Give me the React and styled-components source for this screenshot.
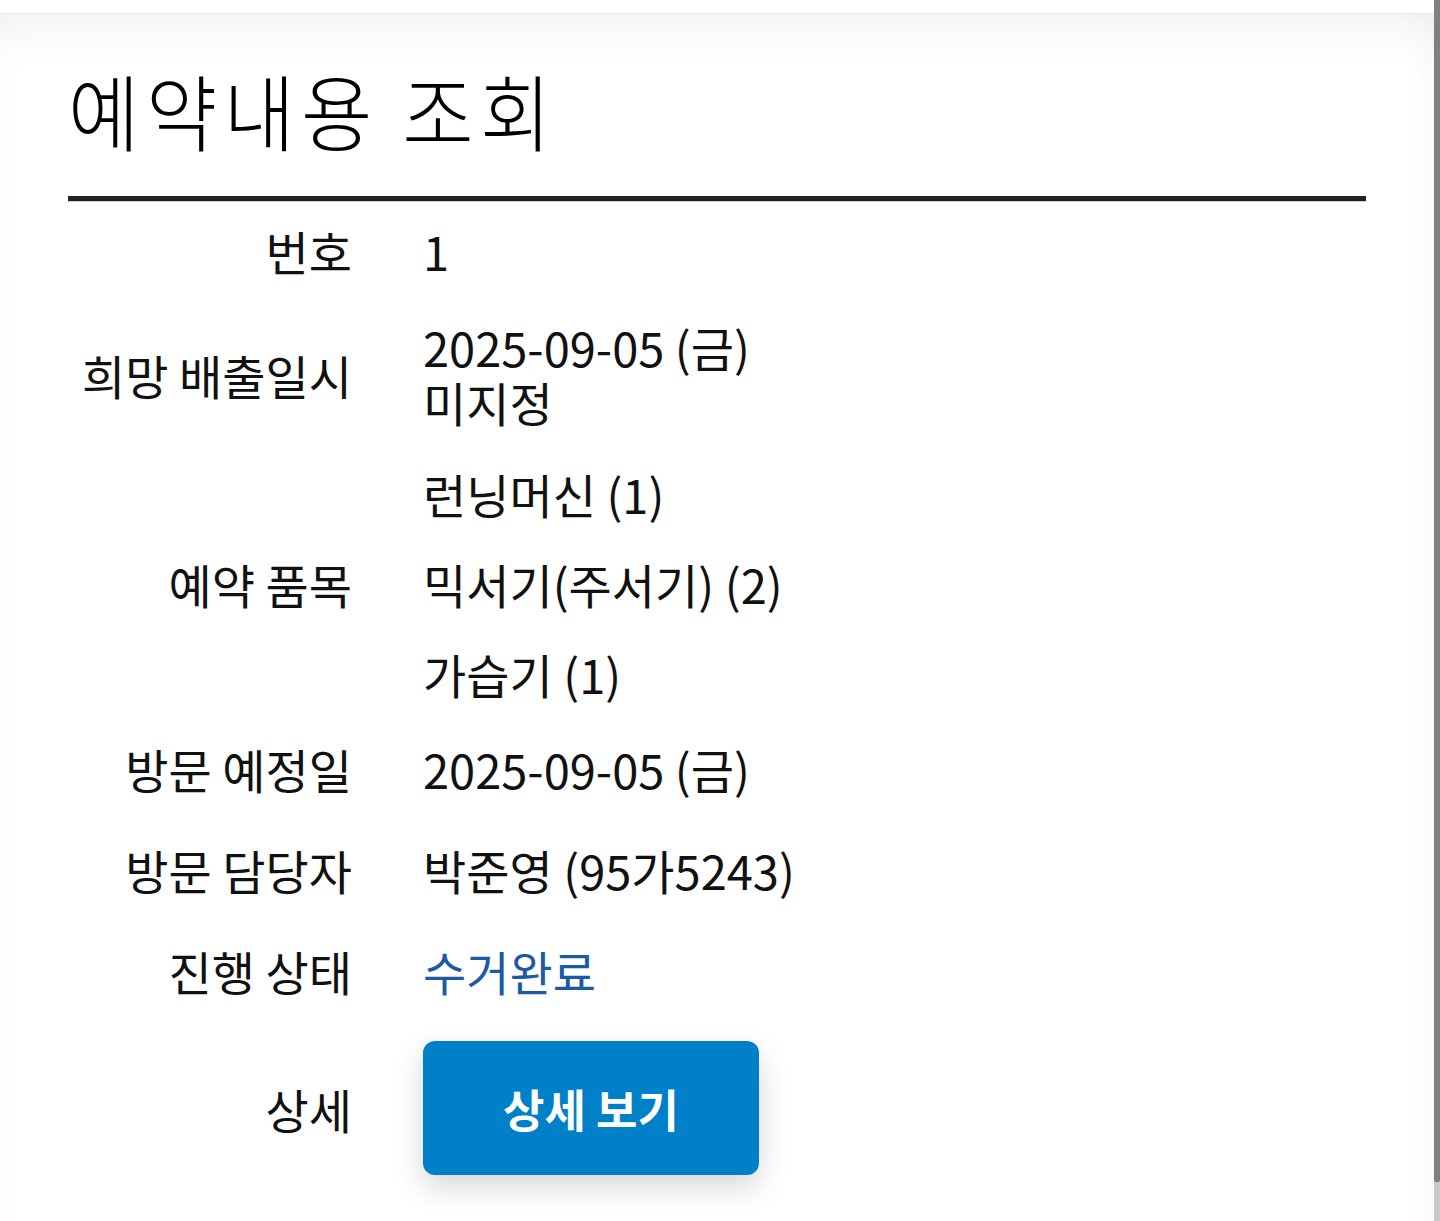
import React from "react";
import styled, { createGlobalStyle } from "styled-components";

const GlobalStyle = createGlobalStyle`
  html, body { margin: 0; padding: 0; background: #ffffff; }
  body {
    font-family: "Noto Sans CJK KR", "Noto Sans", sans-serif;
    color: #111111;
    overflow: hidden;
  }
  * { box-sizing: border-box; }
`;

const Page = styled.div`
  min-height: 100vh;
  padding-right: 6px;
  background: #ffffff;
`;

const TopStrip = styled.div`
  height: 13px;
  background: #ffffff;
`;

const Sheet = styled.main`
  min-height: calc(100vh - 13px);
  border-top: 1px solid #e6e6e6;
  background: #ffffff;
  box-shadow: inset 0 40px 60px -40px rgba(0, 0, 0, 0.09),
    inset -30px 0 40px -30px rgba(0, 0, 0, 0.035);
  padding: 55px 68px 40px 68px;
`;

const Title = styled.h1`
  margin: 0;
  font-family: "Noto Sans CJK KR", sans-serif;
  font-weight: 300;
  font-size: 80px;
  line-height: 80px;
  letter-spacing: 6.5px;
  color: #000;
  transform: scale(0.97, 1.03);
  transform-origin: left center;
`;

const Rule = styled.div`
  margin-top: 47px;
  height: 5px;
  background: #222222;
  box-shadow: 0 1px 0 #cfcfcf;
  margin-bottom: 1px;
`;

const InfoTable = styled.div`
  display: grid;
  grid-template-columns: 284px 1fr;
  column-gap: 71px;
`;

const Label = styled.div`
  display: flex;
  align-items: center;
  justify-content: flex-end;
  font-size: 47px;
  line-height: 55px;
  color: #111;
  white-space: nowrap;
  padding: ${(p) => p.$pad || "23px 0"};
`;

const Value = styled.div`
  display: flex;
  flex-direction: column;
  justify-content: center;
  font-size: 47px;
  line-height: 55px;
  color: ${(p) => (p.$accent ? "#1d5aa6" : "#111")};
  white-space: nowrap;
  padding: ${(p) => p.$pad || "23px 0"};
`;

const Line = styled.span`
  display: block;
`;

const Item = styled.div`
  padding: 17.5px 0;
`;

const DetailButton = styled.button`
  width: 336px;
  height: 134px;
  border: none;
  border-radius: 12px;
  background: #0080c8;
  color: #ffffff;
  font-family: "Noto Sans CJK KR", sans-serif;
  font-weight: 700;
  font-size: 45px;
  letter-spacing: 0;
  cursor: pointer;
  box-shadow: 0 12px 30px rgba(0, 0, 0, 0.16);
`;

const ScrollTrack = styled.div`
  position: fixed;
  top: 0;
  right: 0;
  width: 6px;
  height: 100vh;
  background: #c8c8c8;
`;

const ScrollThumb = styled.div`
  width: 6px;
  height: 1182px;
  background: #808080;
  border-radius: 0 0 2px 2px;
`;

const items = ["런닝머신 (1)", "믹서기(주서기) (2)", "가습기 (1)"];

export default function App() {
  return (
    <Page>
      <GlobalStyle />
      <TopStrip />
      <Sheet>
        <Title>예약내용 조회</Title>
        <Rule />
        <InfoTable>
          <Label $pad="21px 0 23px">번호</Label>
          <Value $pad="21px 0 23px">1</Value>

          <Label $pad="18px 0 19px">희망 배출일시</Label>
          <Value $pad="18px 0 19px">
            <Line>2025-09-05 (금)</Line>
            <Line>미지정</Line>
          </Value>

          <Label $pad="0">예약 품목</Label>
          <Value $pad="0">
            {items.map((it) => (
              <Item key={it}>{it}</Item>
            ))}
          </Value>

          <Label>방문 예정일</Label>
          <Value>2025-09-05 (금)</Value>

          <Label>방문 담당자</Label>
          <Value>박준영 (95가5243)</Value>

          <Label>진행 상태</Label>
          <Value $accent>수거완료</Value>

          <Label $pad="20px 0">상세</Label>
          <Value $pad="20px 0">
            <DetailButton type="button">상세 보기</DetailButton>
          </Value>
        </InfoTable>
      </Sheet>
      <ScrollTrack>
        <ScrollThumb />
      </ScrollTrack>
    </Page>
  );
}
